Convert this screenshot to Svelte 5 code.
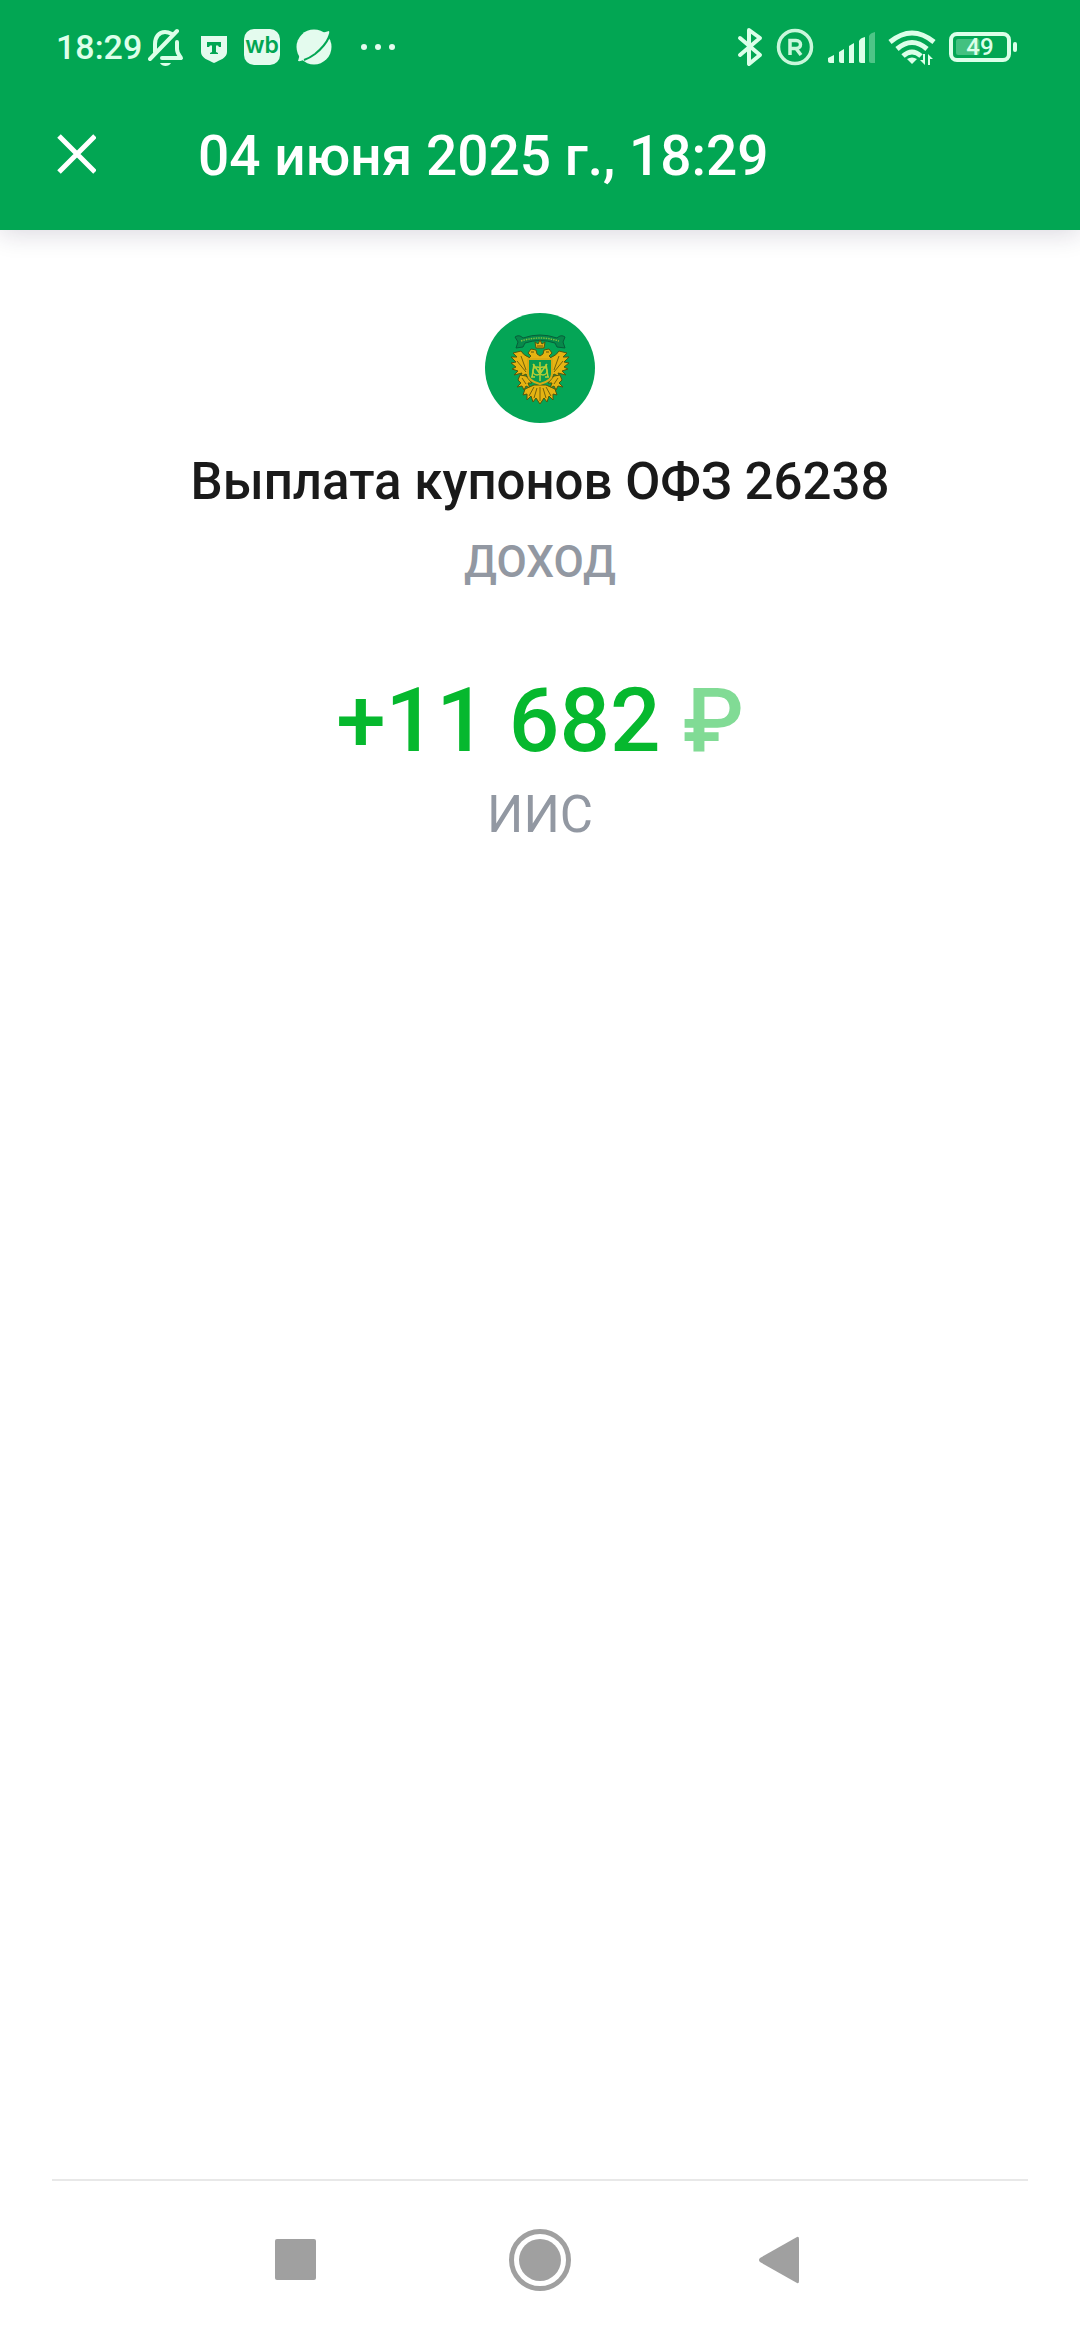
<script>
    export let title = '04 июня 2025 г., 18:29';
    export let operation = {
        name: 'Выплата купонов ОФЗ 26238',
        kind: 'ДОХОД',
        amount: '+11 682',
        currency: '₽',
        account: 'ИИС'
    };
    export let clock = '18:29';
    export let battery = 49;
</script>

<svelte:head>
    <title>{title}</title>
</svelte:head>

<div class="screen">
    <header>
        <div class="status-bar">
            <span class="clock">{clock}</span>
            <div class="notifications">
                <!-- muted bell -->
                <svg width="36" height="40" viewBox="0 0 36 40" fill="none" stroke="#dcffe9" stroke-width="4" stroke-linecap="round" stroke-linejoin="round">
                    <path d="M7 25V17C7 10 11 5 17 5C20 5 22 6 24 7"/>
                    <path d="M29 15V22C29 26 31 28 33 31H14"/>
                    <path d="M29 4L2 32"/>
                    <path d="M12 36H23C21 40 14 40 12 36Z" fill="#dcffe9" stroke="none"/>
                </svg>
                <svg width="28" height="40" viewBox="0 0 28 40">
                    <path d="M1 9H27V25C27 31 20 33 14 36C8 33 1 31 1 25Z" fill="#e4fbee"/>
                    <path d="M7 15H21V20H19L18 18.500H16V25L18 26V27H10V26L12 25V18.500H10L9 20H7Z" fill="#02a653"/>
                </svg>
                <svg width="36" height="40" viewBox="0 0 36 40">
                    <rect y="2" width="36" height="36" rx="10" fill="#e4fbee"/>
                    <text x="18" y="26" text-anchor="middle" class="wb">wb</text>
                </svg>
                <!-- planet with a ring -->
                <svg width="36" height="40" viewBox="0 0 36 40">
                    <circle cx="18" cy="20" r="17.500" fill="#e4fbee"/>
                    <path d="M26 6L33 4C35 8 24 21 18 26C12 31 5 35 2 34L4 27Z" fill="#e4fbee"/>
                    <path d="M33 10C30 17 24 23 19 27C15 30 11 32 8 33" fill="none" stroke="#02a653" stroke-width="2"/>
                </svg>
                <svg class="more" width="36" height="40" viewBox="0 0 36 40" fill="#e4fbee">
                    <circle cx="4" cy="20" r="3"/>
                    <circle cx="18" cy="20" r="3"/>
                    <circle cx="32" cy="20" r="3"/>
                </svg>
            </div>
            <div class="indicators">
                <svg width="26" height="40" viewBox="0 0 26 40" fill="none" stroke="#dcffe9" stroke-width="4" stroke-linecap="round" stroke-linejoin="round">
                    <path d="M3 11L23 28L12 37V3L23 11L3 28"/>
                </svg>
                <svg width="38" height="40" viewBox="0 0 38 40" fill="none" stroke="#c9f7db">
                    <circle cx="19" cy="20" r="16.500" stroke-width="3.500"/>
                    <path d="M14 28V13.500H20C26 13.500 26 21.500 20 21.500H14M20 21.500L25 28" stroke-width="3.500"/>
                </svg>
                <svg width="48" height="40" viewBox="0 0 48 40" fill="#dcffe9">
                    <path d="M1 31L7 28V36H3Q1 36 1 34Z"/>
                    <path d="M12 25L17 22V36H14Q12 36 12 34Z"/>
                    <path d="M22 19L27 16V36H22Z"/>
                    <path d="M32 14Q33 11 38 10V36H34Q32 36 32 34Z"/>
                    <path d="M42 9Q43 6 48 5V36H44Q42 36 42 34Z" opacity=".35"/>
                </svg>
                <svg width="48" height="40" viewBox="0 0 48 40" fill="none" stroke="#dcffe9" stroke-width="5">
                    <path d="M2 15Q24 -3 46 15"/>
                    <path d="M9 22Q24 9 39 22"/>
                    <path d="M15 29Q24 21 33 29"/>
                    <path d="M19 32Q24 29 29 32L24 37Z" fill="#dcffe9" stroke="none"/>
                    <path d="M37 27V38L32 33H35V27ZM40 38V27L45 32H42V38Z" fill="#dcffe9" stroke="none"/>
                </svg>
                <svg width="68" height="40" viewBox="0 0 68 40">
                    <rect x="2" y="7" width="58" height="26" rx="6" fill="none" stroke="#dcffe9" stroke-width="4"/>
                    <rect x="7" y="12" width={battery * 0.48} height="16" rx="2" fill="#dcffe9" opacity=".3"/>
                    <rect x="64" y="15" width="4" height="10" rx="2" fill="#dcffe9"/>
                    <text x="31" y="28" text-anchor="middle" class="charge">{battery}</text>
                </svg>
            </div>
        </div>
        <div class="toolbar">
            <button type="button" class="close" aria-label="Закрыть">
                <svg width="40" height="40" viewBox="0 0 40 40" stroke="#fff" stroke-width="5">
                    <path d="M3 2L39 38M39 2L3 38"/>
                </svg>
            </button>
            <h1>{title}</h1>
        </div>
    </header>

    <main>
        <svg class="emblem" viewBox="0 0 110 110" aria-hidden="true">
            <circle cx="55" cy="55" r="55" fill="#04a556"/>
            <!-- ribbon -->
            <path d="M30 24Q34 21 38 25Q55 19 72 25Q76 21 80 24L78 29L80 35L72 34L70 30Q55 25 40 30L38 34L31 35L33 29Z" fill="#07884a" stroke="#075f3a" stroke-width="1"/>
            <path d="M36 28Q55 22 74 28" fill="none" stroke="#7cc03c" stroke-width="1.500" stroke-dasharray="1.500 1"/>
            <!-- eagle -->
            <g fill="#e5b312" stroke="#51570f" stroke-width="1" stroke-linejoin="round">
                <path d="M45 45Q38 42 36 38L28 40L32 44L26 44L31 49L26 50L31 54L27 56L33 58L29 62L37 60L35 64L41 61L44 66Z"/>
                <path d="M65 45Q72 42 74 38L82 40L78 44L84 44L79 49L84 50L79 54L83 56L77 58L81 62L73 60L75 64L69 61L66 66Z"/>
                <path d="M41 63L35 62L33 67L36 70L32 74L37 73L39 77L41 73L45 75L43 70L47 70Z"/>
                <path d="M69 63L75 62L77 67L74 70L78 74L73 73L71 77L69 73L65 75L67 70L63 70Z"/>
                <path d="M49 72L40 76L38 82L42 81L42 87L46 83L48 89L51 85L55 91L59 85L62 89L64 83L68 87L68 81L72 82L70 76L61 72Z"/>
                <path d="M43 46L46 43L43 40L46 36L51 37L52 41L55 43L58 41L59 37L64 36L67 40L64 43L67 46Z"/>
                <path d="M50 29L53 31L55 27L57 31L60 29L59 35H51Z"/>
            </g>
            <path d="M36 43L41 57M32 48L41 59M74 43L69 57M78 48L69 59M49 74L44 83M52 75L49 85M55 74V88M58 75L61 85M61 74L66 83M37 65L41 71M73 65L69 71" fill="none" stroke="#74630c" stroke-width="1"/>
            <path d="M43 46H67V61Q67 68 55 71Q43 68 43 61Z" fill="#079b50" stroke="#d7aa15" stroke-width="2"/>
            <g fill="none" stroke="#b9ce35" stroke-width="1.500">
                <path d="M55 49V68M49 51L47 64M61 51L63 64M48 51L55 61L62 51M46 64H50M60 64H64"/>
                <circle cx="52" cy="58" r="4"/>
                <circle cx="58" cy="58" r="4"/>
            </g>
            <path d="M46 39H49M61 39H64M52 33H58" stroke="#5e550c" stroke-width="1"/>
        </svg>
        <h2>{operation.name}</h2>
        <p class="kind">{operation.kind}</p>
        <p class="amount">{operation.amount} <span class="currency">{operation.currency}</span></p>
        <p class="account">{operation.account}</p>
    </main>

    <nav>
        <button type="button" aria-label="Недавние">
            <svg width="64" height="64" viewBox="0 0 64 64" fill="#a0a0a0">
                <rect x="11" y="11" width="41" height="41" rx="2"/>
            </svg>
        </button>
        <button type="button" aria-label="Домой">
            <svg width="64" height="64" viewBox="0 0 64 64" fill="#a0a0a0">
                <circle cx="32" cy="32" r="21"/>
                <circle cx="32" cy="32" r="28.500" fill="none" stroke="#a0a0a0" stroke-width="5"/>
            </svg>
        </button>
        <button type="button" aria-label="Назад">
            <svg width="64" height="64" viewBox="0 0 64 64" fill="#a0a0a0">
                <path d="M45 9Q47 8 47 11V53Q47 56 45 55L8 34Q6 32 8 30Z"/>
            </svg>
        </button>
    </nav>
</div>

<style>
    :global(body) {margin: 0; background: #fff;}
    .screen {display: flex; flex-direction: column; min-height: 100vh; font-family: Roboto, "Noto Sans", sans-serif; color: #1a1a1a; background: #fff;}
    svg {display: block; flex: none;}
    button {padding: 0; border: none; background: none; cursor: pointer;}
    h1, h2, p {margin: 0; font-weight: 500;}

    header {position: relative; padding-bottom: 16px; color: #fff; background: #02a653; box-shadow: 0 4px 24px rgba(30, 20, 60, 0.16);}
    .status-bar {display: flex; align-items: center; height: 94px; padding: 0 63px 0 56px;}
    .clock {font-size: 34px; font-weight: 500; line-height: 40px; color: #dcffe9;}
    .notifications {display: flex; flex: 1; gap: 16px; margin-left: 6px;}
    .more {margin-left: 12px;}
    .indicators {display: flex; gap: 13px;}
    .wb {font: 600 23px Inter, sans-serif; fill: #02a653;}
    .charge {font-size: 24px; font-weight: 500; fill: #dcffe9;}

    .toolbar {display: flex; align-items: center; height: 120px; padding: 0 56px;}
    .close {display: flex; margin-right: 102px;}
    h1 {padding-top: 4px; font-size: 55px; line-height: 64px;}

    main {display: flex; flex: 1; flex-direction: column; align-items: center; padding: 83px 52px 0; text-align: center;}
    .emblem {width: 110px; height: 110px;}
    h2 {margin-top: 29px; font-size: 51px; line-height: 60px;}
    .kind {margin-top: 20px; font-size: 44px; line-height: 60px; color: #9298a2;}
    .amount {margin-top: 79px; font-size: 89px; line-height: 100px; color: #06b82e;}
    .currency {opacity: 0.5;}
    .account {margin-top: 14px; font-size: 51px; font-weight: 400; line-height: 60px; color: #9298a2;}

    nav {display: flex; justify-content: center; gap: 180px; margin: 0 52px; padding: 47px 0 48px; border-top: 2px solid #e8e8e8;}
</style>
